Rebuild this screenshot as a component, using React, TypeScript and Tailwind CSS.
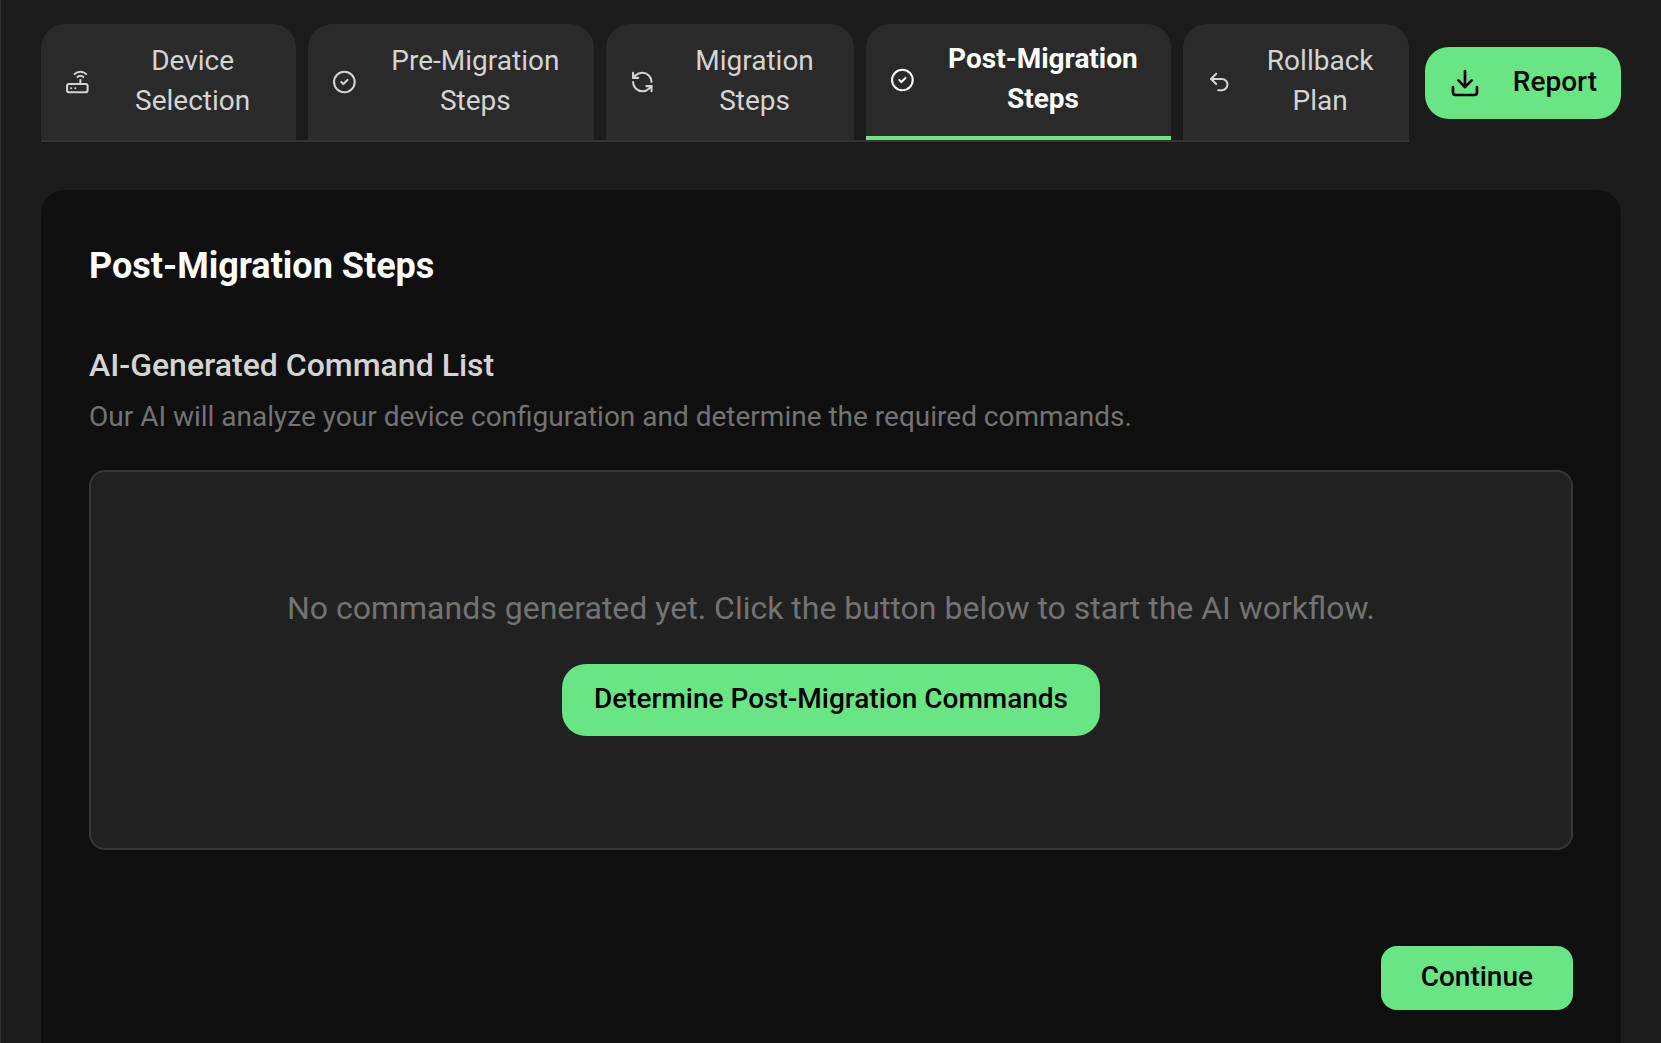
import { CircleCheck, Download, RefreshCcw, Router, Undo2 } from "lucide-react";
import type { LucideIcon } from "lucide-react";
import { useState } from "react";

interface Step {
  id: string;
  title: string;
  icon: LucideIcon;
}

const STEPS: Step[] = [
  { id: "device", title: "Device Selection", icon: Router },
  { id: "pre", title: "Pre-Migration Steps", icon: CircleCheck },
  { id: "migration", title: "Migration Steps", icon: RefreshCcw },
  { id: "post", title: "Post-Migration Steps", icon: CircleCheck },
  { id: "rollback", title: "Rollback Plan", icon: Undo2 },
];

interface StepTabProps {
  step: Step;
  active: boolean;
  onSelect: () => void;
}

function StepTab({ step, active, onSelect }: StepTabProps) {
  const Icon = step.icon;
  return (
    <button
      type="button"
      role="tab"
      aria-selected={active}
      onClick={onSelect}
      className={`flex items-center justify-center gap-6 rounded-t-3xl bg-[#2a2a2a] px-6 py-[15px] ${
        active ? "border-b-4 border-[#6ae584] font-bold text-white" : "text-[#d4d4d4]"
      }`}
    >
      <Icon size={32} />
      <span className="pb-0.5 text-center">{step.title}</span>
    </button>
  );
}

export default function App() {
  const [current, setCurrent] = useState("post");

  return (
    <div className="flex h-screen flex-col overflow-hidden border-l border-[#333] bg-[#1b1b1b] px-10 pt-6 font-[Roboto,sans-serif] text-[28px] leading-10 text-[#d4d4d4]">
      <header className="flex items-center gap-4">
        <div role="tablist" className="flex min-w-0 flex-1 gap-3 border-b-2 border-[#363636]">
          {STEPS.map((step) => (
            <StepTab
              key={step.id}
              step={step}
              active={step.id === current}
              onSelect={() => setCurrent(step.id)}
            />
          ))}
        </div>
        <button
          type="button"
          className="flex h-18 shrink-0 items-center gap-8 rounded-3xl bg-[#6ae584] px-6 font-medium text-black"
        >
          <Download size={32} />
          <span className="pb-0.5">Report</span>
        </button>
      </header>

      <main className="mt-12 flex-1 rounded-t-3xl bg-[#0f0f0f] px-12 pt-12">
        <h1 className="text-4xl leading-14 font-bold text-white">Post-Migration Steps</h1>

        <section className="mt-[47px]">
          <h2 className="text-[32px] leading-12 font-medium">AI-Generated Command List</h2>
          <p className="mt-2 text-[#737373]">
            Our AI will analyze your device configuration and determine the required commands.
          </p>
          <div className="mt-[33px] flex h-95 flex-col items-center justify-center gap-8 rounded-2xl border-2 border-[#363636] bg-[#212121]">
            <p className="text-[32px] leading-12 text-[#737373]">
              No commands generated yet. Click the button below to start the AI workflow.
            </p>
            <button
              type="button"
              className="h-18 rounded-3xl bg-[#6ae584] px-8 pb-0.5 font-medium text-black"
            >
              Determine Post-Migration Commands
            </button>
          </div>
        </section>

        <div className="mt-24 flex justify-end">
          <button
            type="button"
            className="h-16 rounded-2xl bg-[#6ae584] px-10 pb-0.5 font-medium text-black"
          >
            Continue
          </button>
        </div>
      </main>
    </div>
  );
}
